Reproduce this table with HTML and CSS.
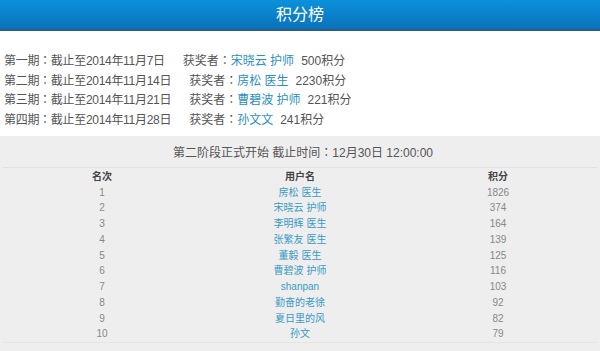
FILE: index.html
```html
<!DOCTYPE html>
<html>
<head>
<meta charset="utf-8">
<link rel="stylesheet" href="styles.css">
</head>
<body>
<div class="header">积分榜</div>
<div class="periods">
  <div class="period"><span class="when">第一期<span class="colon">：</span>截止至2014年11月7日</span><span class="label">获奖者<span class="colon">：</span></span><a class="name">宋晓云 护师</a><span class="pts">500积分</span></div>
  <div class="period"><span class="when">第二期<span class="colon">：</span>截止至2014年11月14日</span><span class="label">获奖者<span class="colon">：</span></span><a class="name">房松 医生</a><span class="pts">2230积分</span></div>
  <div class="period"><span class="when">第三期<span class="colon">：</span>截止至2014年11月21日</span><span class="label">获奖者<span class="colon">：</span></span><a class="name">曹碧波 护师</a><span class="pts">221积分</span></div>
  <div class="period"><span class="when">第四期<span class="colon">：</span>截止至2014年11月28日</span><span class="label">获奖者<span class="colon">：</span></span><a class="name">孙文文</a><span class="pts">241积分</span></div>
</div>
<div class="board">
  <div class="board-title">第二阶段正式开始 截止时间<span class="colon">：</span>12月30日 12:00:00</div>
  <table class="rank">
    <thead>
      <tr><th>名次</th><th>用户名</th><th>积分</th></tr>
    </thead>
    <tbody>
      <tr><td>1</td><td class="user">房松 医生</td><td>1826</td></tr>
      <tr><td>2</td><td class="user">宋晓云 护师</td><td>374</td></tr>
      <tr><td>3</td><td class="user">李明辉 医生</td><td>164</td></tr>
      <tr><td>4</td><td class="user">张繁友 医生</td><td>139</td></tr>
      <tr><td>5</td><td class="user">董毅 医生</td><td>125</td></tr>
      <tr><td>6</td><td class="user">曹碧波 护师</td><td>116</td></tr>
      <tr><td>7</td><td class="user">shanpan</td><td>103</td></tr>
      <tr><td>8</td><td class="user">勤奋的老徐</td><td>92</td></tr>
      <tr><td>9</td><td class="user">夏日里的风</td><td>82</td></tr>
      <tr><td>10</td><td class="user">孙文</td><td>79</td></tr>
    </tbody>
  </table>
</div>
</body>
</html>
```
FILE: styles.css
```css
html, body {
  margin: 0;
  padding: 0;
  background: #fff;
  font-family: "Liberation Sans", "Noto Sans CJK SC", sans-serif;
}
.header {
  height: 29px;
  line-height: 29px;
  text-align: center;
  color: #fff;
  font-size: 16px;
  background: linear-gradient(#0c91db, #0a72bb);
  border-bottom: 2px solid #2a5d8a;
}
.colon {
  font-family: "Noto Sans CJK TC", sans-serif;
  line-height: 0;
}
.periods {
  padding: 21px 4px 6px;
  font-size: 12px;
  color: #555;
}
.period {
  height: 19.6px;
  line-height: 19.6px;
  white-space: nowrap;
}
.when {
  letter-spacing: -0.3px;
}
.label {
  margin-left: 18px;
}
.name {
  color: #2b8fc2;
}
.pts {
  margin-left: 7px;
}
.board {
  background: #eeeeee;
  padding: 7px 3px 10px;
}
.board-title {
  text-align: center;
  font-size: 12px;
  height: 20px;
  line-height: 20px;
  color: #555;
  padding: 0 0 4px 6px;
  border-bottom: 1px solid #e2e2e2;
}
.rank {
  width: 100%;
  border-collapse: collapse;
  table-layout: fixed;
  font-size: 10px;
  border-bottom: 1px solid #e4e4e4;
}
.rank th, .rank td {
  height: 15.75px;
  padding: 0;
  text-align: center;
  line-height: 15px;
}
.rank th {
  color: #444;
  font-weight: bold;
}
.rank td {
  color: #888;
}
.rank td.user {
  color: #3a9bc6;
}
```
